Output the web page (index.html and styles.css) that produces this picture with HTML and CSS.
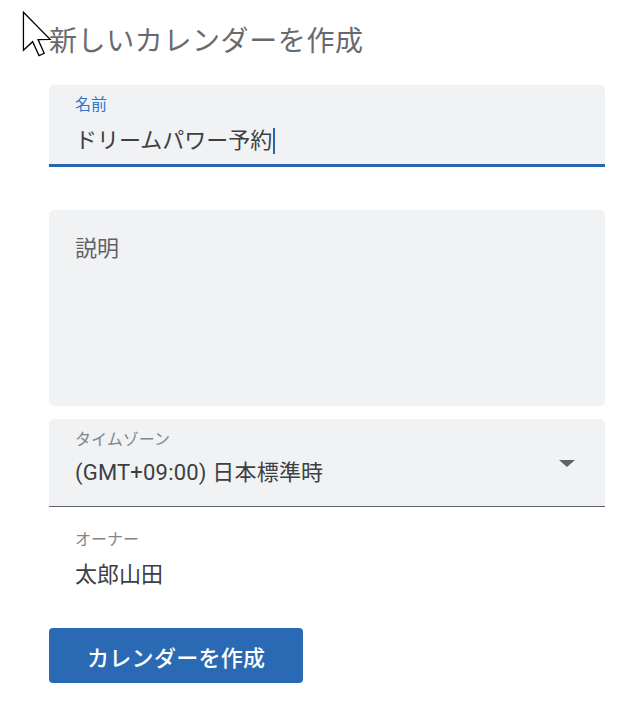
FILE: index.html
```html
<!DOCTYPE html>
<html lang="ja">
<head>
  <meta charset="UTF-8">
  <title>新しいカレンダーを作成</title>
  <link rel="stylesheet" href="styles.css">
</head>
<body>
<div class="page">
  <h1 class="title">新しいカレンダーを作成</h1>

  <div class="field field-focus">
    <div class="label label-blue">名前</div>
    <div class="value">ドリームパワー予約<span class="caret"></span></div>
  </div>

  <div class="field field-area">
    <div class="value value-muted">説明</div>
  </div>

  <div class="field field-select">
    <div class="select-text">
      <div class="label">タイムゾーン</div>
      <div class="value">(GMT+09:00) 日本標準時</div>
    </div>
    <span class="arrow"></span>
  </div>

  <div class="owner">
    <div class="label">オーナー</div>
    <div class="value">太郎山田</div>
  </div>

  <button class="btn" type="button">カレンダーを作成</button>
</div>

<!--マウスカーソル-->
<svg class="cursor" width="30" height="46" viewBox="0 0 12.5 19.5">
  <path d="M0.5 0.5 L0.5 16.6 L4.4 13 L7.1 18.9 L9.3 17.9 L6.7 12.1 L11.8 12 Z"
        fill="#fff" stroke="#000" stroke-width="0.55" stroke-linejoin="miter"/>
</svg>
</body>
</html>
```

FILE: styles.css
```css
* {
  margin: 0;
  padding: 0;
  box-sizing: border-box;
}

body {
  background: #fff;
  font-family: Roboto, "Noto Sans CJK JP", sans-serif;
  color: #3c4043;
}

.page {
  width: 556px;
  margin-left: 49px;
  padding-top: 25px;
}

.title {
  font-size: 28px;
  line-height: 34px;
  font-weight: 400;
  letter-spacing: 0.6px;
  color: #676b70;
  margin-bottom: 26px;
}

.field {
  background-color: #f1f2f4;
  border-radius: 5px 5px 0 0;
  padding: 0 26px;
}

.label {
  font-size: 16px;
  line-height: 20px;
  color: #80868b;
}

.label-blue {
  color: #3274cc;
}

.value {
  font-size: 22px;
  line-height: 26px;
  color: #3c4043;
}

.value-muted {
  color: #5f6368;
}

.field-focus {
  height: 82px;
  padding-top: 10px;
  border-bottom: 3px solid #2866b4;
}

.field-focus .value {
  margin-top: 13px;
}

.caret {
  display: inline-block;
  width: 2px;
  height: 26px;
  margin-left: 1px;
  background-color: #2866b4;
  vertical-align: top;
}

.field-area {
  height: 196px;
  margin-top: 43px;
  padding-top: 26px;
  border-radius: 5px;
}

.field-select {
  display: flex;
  align-items: flex-start;
  justify-content: space-between;
  height: 88px;
  margin-top: 13px;
  padding-top: 11px;
  padding-right: 30px;
  border-bottom: 1px solid #5f6368;
}

.field-select .value {
  margin-top: 10px;
  letter-spacing: 0.2px;
}

.arrow {
  width: 0;
  height: 0;
  margin-top: 30px;
  border-left: 8px solid transparent;
  border-right: 8px solid transparent;
  border-top: 7px solid #5f6368;
}

.owner {
  padding: 23px 26px 0;
}

.owner .value {
  margin-top: 12px;
}

.btn {
  display: inline-block;
  height: 55px;
  margin-top: 40px;
  padding: 0 38px 0 38px;
  border: none;
  border-radius: 4px;
  background-color: #2a6ab5;
  color: #fff;
  font-family: Roboto, "Noto Sans CJK JP", sans-serif;
  font-size: 22px;
  font-weight: 500;
  letter-spacing: 0.3px;
  cursor: pointer;
}

.cursor {
  position: absolute;
  left: 22px;
  top: 11px;
}
```
